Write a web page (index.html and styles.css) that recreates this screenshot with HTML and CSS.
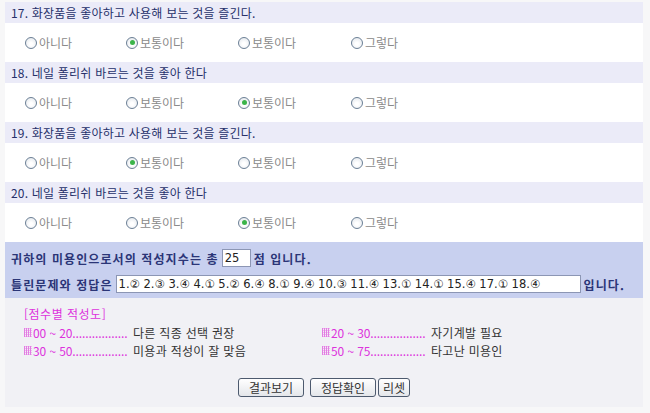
FILE: index.html
```html
<!DOCTYPE html>
<html lang="ko">
<head>
<meta charset="utf-8">
<title>적성 테스트</title>
<link rel="stylesheet" href="styles.css">
</head>
<body>
<div class="panel">
  <div class="q-title">17. 화장품을 좋아하고 사용해 보는 것을 즐긴다.</div>
  <div class="q-opts">
    <label class="opt"><input type="radio" name="q17">아니다</label>
    <label class="opt"><input type="radio" name="q17" checked>보통이다</label>
    <label class="opt"><input type="radio" name="q17">보통이다</label>
    <label class="opt"><input type="radio" name="q17">그렇다</label>
  </div>
  <div class="q-title">18. 네일 폴리쉬 바르는 것을 좋아 한다</div>
  <div class="q-opts">
    <label class="opt"><input type="radio" name="q18">아니다</label>
    <label class="opt"><input type="radio" name="q18">보통이다</label>
    <label class="opt"><input type="radio" name="q18" checked>보통이다</label>
    <label class="opt"><input type="radio" name="q18">그렇다</label>
  </div>
  <div class="q-title">19. 화장품을 좋아하고 사용해 보는 것을 즐긴다.</div>
  <div class="q-opts">
    <label class="opt"><input type="radio" name="q19">아니다</label>
    <label class="opt"><input type="radio" name="q19" checked>보통이다</label>
    <label class="opt"><input type="radio" name="q19">보통이다</label>
    <label class="opt"><input type="radio" name="q19">그렇다</label>
  </div>
  <div class="q-title">20. 네일 폴리쉬 바르는 것을 좋아 한다</div>
  <div class="q-opts">
    <label class="opt"><input type="radio" name="q20">아니다</label>
    <label class="opt"><input type="radio" name="q20">보통이다</label>
    <label class="opt"><input type="radio" name="q20" checked>보통이다</label>
    <label class="opt"><input type="radio" name="q20">그렇다</label>
  </div>

  <div class="result">
    <div class="res-line">귀하의 미용인으로서의 적성지수는 총 <input class="score" type="text" value="25"> 점 입니다.</div>
    <div class="res-line">틀린문제와 정답은 <input class="answers" type="text" value="1.② 2.③ 3.④ 4.① 5.② 6.④ 8.① 9.④ 10.③ 11.④ 13.① 14.① 15.④ 17.① 18.④"> 입니다.</div>
  </div>

  <div class="legend">
    <div class="legend-title">[점수별 적성도]</div>
    <div class="legend-grid">
      <div class="legend-item"><span class="range"><svg class="dots" width="8" height="9" viewBox="0 0 8 9"><defs><pattern id="p" width="2" height="2" patternUnits="userSpaceOnUse"><rect width="1" height="2" fill="#e27ee2"/><rect x="1" y="0" width="1" height="1" fill="#f0b8f0"/></pattern></defs><rect width="8" height="9" fill="url(#p)"/></svg>00 ~ 20.................</span><span class="desc">다른 직종 선택 권장</span></div>
      <div class="legend-item"><span class="range"><svg class="dots" width="8" height="9" viewBox="0 0 8 9"><rect width="8" height="9" fill="url(#p)"/></svg>20 ~ 30.................</span><span class="desc">자기계발 필요</span></div>
      <div class="legend-item"><span class="range"><svg class="dots" width="8" height="9" viewBox="0 0 8 9"><rect width="8" height="9" fill="url(#p)"/></svg>30 ~ 50.................</span><span class="desc">미용과 적성이 잘 맞음</span></div>
      <div class="legend-item"><span class="range"><svg class="dots" width="8" height="9" viewBox="0 0 8 9"><rect width="8" height="9" fill="url(#p)"/></svg>50 ~ 75.................</span><span class="desc">타고난 미용인</span></div>
    </div>
    <div class="buttons">
      <button class="btn btn-wide" type="button">결과보기</button>
      <button class="btn btn-wide" type="button">정답확인</button>
      <button class="btn btn-small" type="button">리셋</button>
    </div>
  </div>
</div>
</body>
</html>
```

FILE: styles.css
```css
html, body {
  margin: 0;
  padding: 0;
  background: #f7f7f8;
}
body {
  font-family: "Noto Sans CJK KR", "Noto Sans", sans-serif;
  font-size: 12px;
  width: 650px;
  height: 413px;
  overflow: hidden;
}
.panel {
  margin: 2px 7px 0 5px;
  width: 638px;
}
.q-title {
  height: 21px;
  line-height: 21px;
  background: #ebebf8;
  color: #26306a;
  padding-left: 6px;
  font-size: 12px;
  letter-spacing: 0.2px;
}
.q-opts {
  height: 39px;
  background: #ffffff;
  display: grid;
  grid-template-columns: 101px 112px 113px auto;
  align-items: center;
  padding-left: 20px;
}
.opt {
  display: flex;
  align-items: center;
  color: #8a8a8a;
  font-size: 12px;
}
.opt input {
  appearance: none;
  -webkit-appearance: none;
  width: 12px;
  height: 12px;
  margin: 0 2px 0 0;
  border: 1px solid #6b7f95;
  border-radius: 50%;
  background: radial-gradient(circle at 50% 60%, #ffffff 20%, #dfe4ea 100%);
  position: relative;
  box-sizing: border-box;
}
.opt input:checked::after {
  content: "";
  position: absolute;
  left: 2.5px;
  top: 2.5px;
  width: 5px;
  height: 5px;
  border-radius: 50%;
  background: #3bb44a;
}
.result {
  background: #c8d0ef;
  height: 56px;
  padding: 3px 0 0 6px;
  box-sizing: border-box;
  color: #2b3577;
  font-weight: bold;
}
.res-line {
  display: flex;
  align-items: center;
  height: 26px;
  white-space: nowrap;
  letter-spacing: 1.1px;
}
.res-line input {
  font-family: "DejaVu Sans", "Noto Sans CJK KR", sans-serif;
  font-size: 11.5px;
  font-weight: normal;
  color: #222;
  height: 18px;
  box-sizing: border-box;
  border: 1px solid #8c96b4;
  background: #fff;
  padding: 0 2px;
  margin: 0 3px;
  letter-spacing: 0;
}
.score {
  width: 29px;
}
.answers {
  width: 465px;
}
.legend {
  background: #f1f1f5;
  height: 109px;
  padding: 7px 0 0 19px;
  box-sizing: border-box;
}
.legend-title {
  color: #dd33dd;
  height: 18px;
  line-height: 18px;
  letter-spacing: 0.5px;
}
.legend-grid {
  display: grid;
  grid-template-columns: 298px auto;
  row-gap: 0;
}
.legend-item {
  display: flex;
  align-items: center;
  height: 18px;
}
.range {
  display: inline-flex;
  align-items: center;
  width: 109px;
  overflow: hidden;
  white-space: nowrap;
  color: #dd33dd;
  letter-spacing: -0.1px;
}
.dots {
  margin-right: 1px;
  flex: none;
}
.desc {
  color: #333;
  letter-spacing: 0.3px;
}
.buttons {
  display: flex;
  justify-content: center;
  margin-top: 19px;
  padding-right: 19px;
  gap: 6px;
}
.btn {
  font-family: "Noto Sans CJK KR", sans-serif;
  font-size: 12px;
  color: #333;
  height: 19px;
  padding: 0;
  line-height: 16px;
  border: 1px solid #4d5a6e;
  border-radius: 3px;
  background: linear-gradient(#ffffff, #e4e6ea);
}
.btn-wide {
  width: 66px;
}
.btn-small {
  width: 32px;
  margin-left: -4px;
}
```
